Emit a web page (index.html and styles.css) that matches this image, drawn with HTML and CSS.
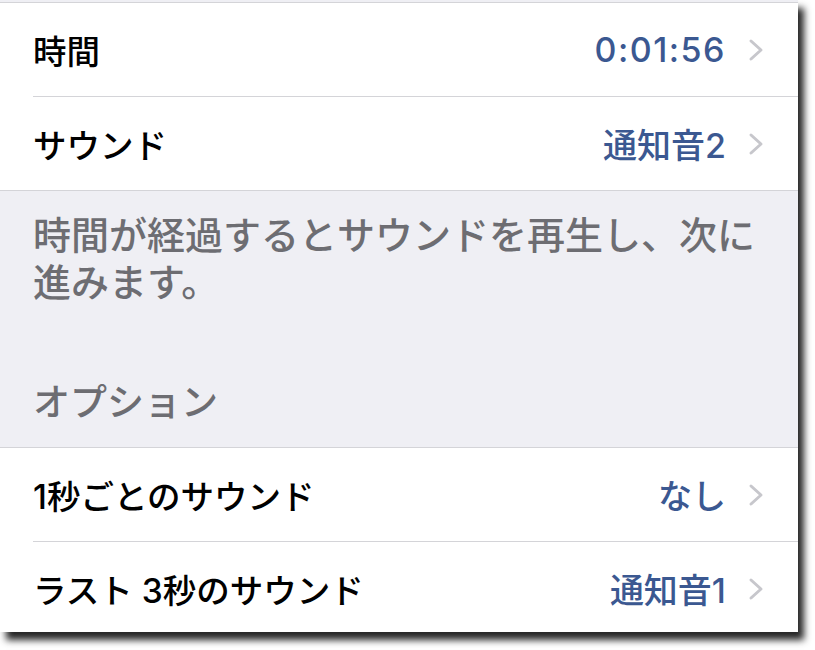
FILE: index.html
```html
<!DOCTYPE html>
<html lang="ja">
<head>
<meta charset="utf-8">
<link rel="stylesheet" href="styles.css">
</head>
<body>
<div class="screen">
  <div class="top-gap"></div>
  <div class="group">
    <div class="row">
      <span class="label">時間</span>
      <span class="value num">0:01:56</span>
      <svg class="chev" width="17" height="24" viewBox="0 0 17 24"><path d="M3 3 L13 12 L3 21" fill="none" stroke="#c7c7cc" stroke-width="3" stroke-linecap="round" stroke-linejoin="round"/></svg>
    </div>
    <div class="row">
      <span class="label">サウンド</span>
      <span class="value">通知音2</span>
      <svg class="chev" width="17" height="24" viewBox="0 0 17 24"><path d="M3 3 L13 12 L3 21" fill="none" stroke="#c7c7cc" stroke-width="3" stroke-linecap="round" stroke-linejoin="round"/></svg>
    </div>
  </div>
  <div class="footer">
    <p class="note">時間が経過するとサウンドを再生し、次に<br>進みます。</p>
    <p class="header">オプション</p>
  </div>
  <div class="group">
    <div class="row">
      <span class="label">1秒ごとのサウンド</span>
      <span class="value">なし</span>
      <svg class="chev" width="17" height="24" viewBox="0 0 17 24"><path d="M3 3 L13 12 L3 21" fill="none" stroke="#c7c7cc" stroke-width="3" stroke-linecap="round" stroke-linejoin="round"/></svg>
    </div>
    <div class="row">
      <span class="label">ラスト 3秒のサウンド</span>
      <span class="value">通知音1</span>
      <svg class="chev" width="17" height="24" viewBox="0 0 17 24"><path d="M3 3 L13 12 L3 21" fill="none" stroke="#c7c7cc" stroke-width="3" stroke-linecap="round" stroke-linejoin="round"/></svg>
    </div>
  </div>
</div>
</body>
</html>
```
FILE: styles.css
```css
html, body {
  margin: 0;
  padding: 0;
  background: #ffffff;
}
body {
  font-family: "Inter", "Noto Sans CJK JP", sans-serif;
  padding-bottom: 18px;
}
.screen {
  width: 798px;
  height: 632px;
  overflow: hidden;
  background: #efeff4;
  box-shadow: 6px 8px 7px rgba(0, 0, 0, 0.85);
}
.top-gap {
  height: 2px;
}
.group {
  background: #ffffff;
  border-top: 1px solid #d4d4d8;
  border-bottom: 1px solid #d4d4d8;
}
.row {
  display: flex;
  align-items: center;
  height: 93px;
  padding: 0 33px;
}
.row + .row {
  border-top: 1px solid #d4d4d8;
  margin-left: 33px;
  padding-left: 0;
}
.label {
  flex: 1;
  font-size: 33.5px;
  font-weight: 500;
  color: #000000;
  white-space: pre;
}
.value {
  font-size: 34px;
  font-weight: 500;
  color: #3b5891;
  margin-right: 22px;
}
.num {
  letter-spacing: 1.5px;
}
.chev {
  display: block;
}
.footer {
  padding: 21px 33px 21px;
  color: #6d6d72;
  font-size: 38px;
  font-weight: 500;
  line-height: 47px;
}
.note {
  margin: 0 0 73px;
  white-space: nowrap;
}
.header {
  margin: 0;
  font-size: 37px;
}
```
